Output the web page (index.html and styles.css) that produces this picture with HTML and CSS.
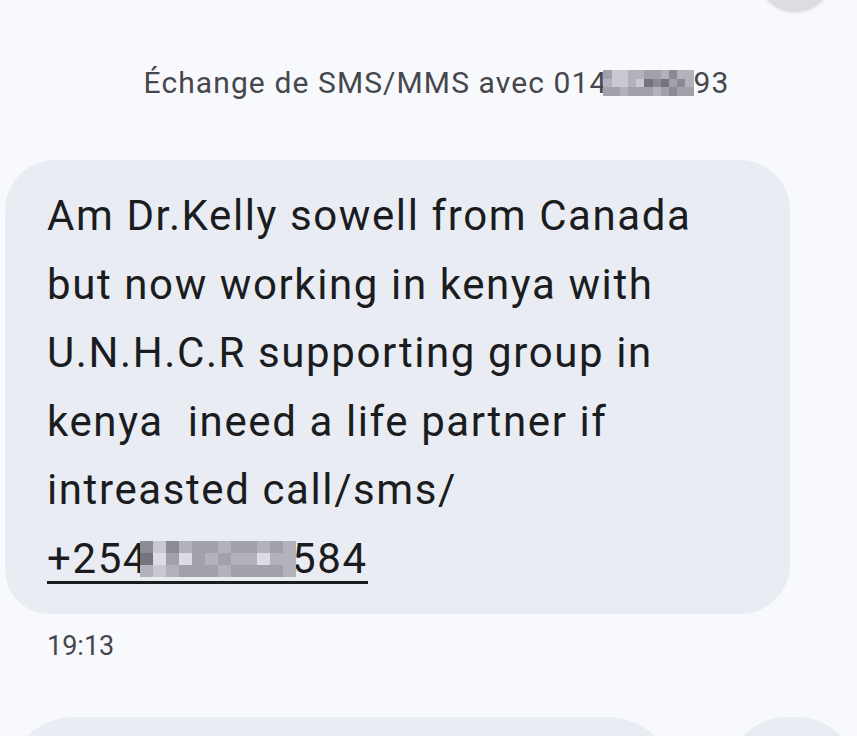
FILE: index.html
```html
<!DOCTYPE html>
<html lang="fr">
<head>
<meta charset="utf-8">
<link rel="stylesheet" href="styles.css">
</head>
<body>
<div class="fab"></div>
<main class="thread">
  <p class="header">Échange de SMS/MMS avec 014<span class="mosaic m-head"><i class="g3"></i><i class="g1"></i><i class="g1"></i><i class="g2"></i><i class="g2"></i><i class="g3"></i><i class="g3"></i><i class="g2"></i><i class="g4"></i><i class="g2"></i><i class="g2"></i><i class="g2"></i><i class="g1"></i><i class="g1"></i><i class="g2"></i><i class="g1"></i><i class="g5"></i><i class="g4"></i><i class="g5"></i><i class="g3"></i><i class="g4"></i><i class="g2"></i><i class="g3"></i><i class="g3"></i><i class="g2"></i><i class="g3"></i><i class="g3"></i><i class="g3"></i><i class="g2"></i><i class="g3"></i><i class="g4"></i><i class="g3"></i><i class="g3"></i></span>93</p>

  <div class="bubble">
    <p class="msg">Am Dr.Kelly sowell from Canada<br>but now working in kenya with<br>U.N.H.C.R supporting group in<br>kenya&nbsp; ineed a life partner if<br>intreasted call/sms/<br><a class="phone">+254<span class="mosaic m-phone"><i class="g4"></i><i class="g1"></i><i class="g4"></i><i class="g2"></i><i class="g3"></i><i class="g3"></i><i class="g2"></i><i class="g3"></i><i class="g3"></i><i class="g2"></i><i class="g3"></i><i class="g2"></i><i class="g5"></i><i class="g0"></i><i class="g3"></i><i class="g0"></i><i class="g3"></i><i class="g2"></i><i class="g3"></i><i class="g2"></i><i class="g2"></i><i class="g0"></i><i class="g2"></i><i class="g2"></i><i class="g2"></i><i class="g1"></i><i class="g2"></i><i class="g3"></i><i class="g3"></i><i class="g3"></i><i class="g2"></i><i class="g3"></i><i class="g3"></i><i class="g3"></i><i class="g3"></i><i class="g2"></i></span>584</a></p>
  </div>
  <p class="time">19:13</p>

  <div class="next-row">
    <div class="bubble-next wide"></div>
    <div class="bubble-next round"></div>
  </div>
</main>
</body>
</html>
```
FILE: styles.css
```css
html, body {
  margin: 0;
  padding: 0;
  background: #f8f9fd;
  overflow: hidden;
  height: 736px;
}
body {
  font-family: Roboto, "Noto Sans", sans-serif;
  position: relative;
}
.fab {
  position: absolute;
  left: 758px;
  top: -62px;
  width: 74px;
  height: 74px;
  border-radius: 50%;
  background: #dcdde1;
  box-shadow: 0 0 0 1px #e9e9ed, 0 2px 3px rgba(0,0,0,0.06);
}
.thread {
  display: flex;
  flex-direction: column;
  padding-top: 64px;
}
.header {
  margin: 0;
  text-align: center;
  font-size: 30px;
  letter-spacing: 1.1px;
  line-height: 38px;
  color: #45474d;
  padding-left: 16px;
}
.mosaic {
  display: inline-grid;
  vertical-align: middle;
}
.mosaic i {
  display: block;
}
.m-head {
  grid-template-columns: repeat(11, 8.2px);
  grid-template-rows: repeat(3, 8.5px);
  margin-top: -4px;
  margin-left: -4px;
}
.m-phone {
  grid-template-columns: repeat(12, 13px);
  grid-template-rows: repeat(3, 12px);
  margin-left: -8px;
  margin-right: -4px;
  margin-top: -6px;
  position: relative;
}
.g0 { background: #dcdde4; }
.g1 { background: #c9cad1; }
.g2 { background: #b2b3ba; }
.g3 { background: #a1a2a9; }
.g4 { background: #8b8c93; }
.g5 { background: #74757c; }

.bubble {
  margin: 58px 0 0 5px;
  width: 785px;
  box-sizing: border-box;
  background: #e9ecf3;
  border-radius: 50px 50px 50px 44px;
  padding: 22px 40px 20px 42px;
}
.msg {
  margin: 0;
  font-size: 42px;
  letter-spacing: 1.6px;
  line-height: 68.6px;
  color: #1b1c20;
}
.phone {
  display: inline-block;
  line-height: 44px;
  border-bottom: 3px solid #1b1c20;
  color: #1b1c20;
}
.time {
  margin: 14px 0 0 47px;
  font-size: 27px;
  line-height: 36px;
  color: #45474d;
}
.next-row {
  display: flex;
  gap: 50px;
  margin-top: 53px;
  padding-left: 5px;
}
.bubble-next {
  height: 120px;
  background: #e9ecf3;
}
.wide {
  width: 684px;
  border-radius: 70px 70px 0 0;
}
.round {
  width: 130px;
  border-radius: 60px 60px 0 0;
  flex: none;
}
```
